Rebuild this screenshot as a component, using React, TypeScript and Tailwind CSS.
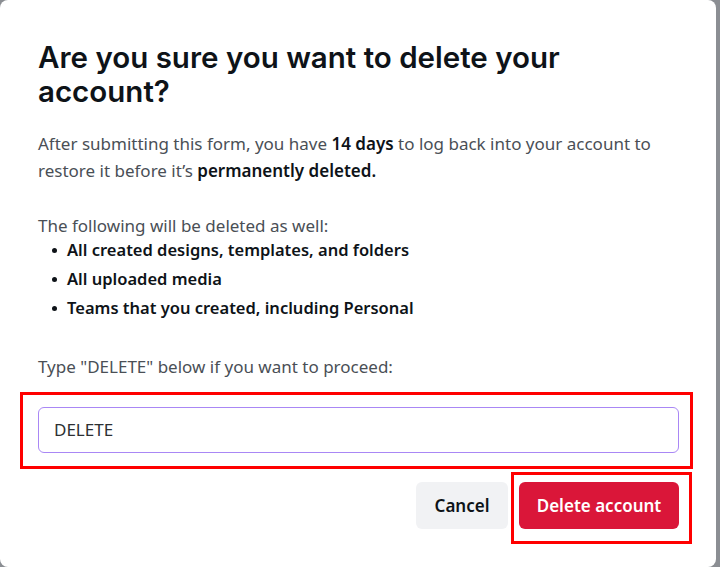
import React from "react";

export default function App() {
  return (
    <div className="w-[720px] h-[567px] bg-[#8b8e93] flex overflow-hidden">
      <div className="relative w-[716px] h-[567px] bg-white rounded-[8px] pl-[38px] pr-[37px] pt-[40px] flex flex-col [font-family:'Noto_Sans',sans-serif]">
        <h1 className="w-[560px] text-[29.5px] leading-[34px] font-semibold text-[#0e1318] tracking-[0px] [font-family:Inter,sans-serif]">
          Are you sure you want to delete your account?
        </h1>
        <p className="mt-[22px] w-[630px] text-[17px] leading-[27px] text-[#4a4f56]">
          After submitting this form, you have{" "}
          <span className="font-semibold text-[#0e1318]">14 days</span> to log back into your account to
          restore it before it’s <span className="font-semibold text-[#0e1318]">permanently deleted.</span>
        </p>
        <p className="mt-[28px] text-[17px] leading-[27px] text-[#4a4f56]">The following will be deleted as well:</p>
        <ul className="flex flex-col -mt-[3px]">
          {[
            "All created designs, templates, and folders",
            "All uploaded media",
            "Teams that you created, including Personal",
          ].map((t) => (
            <li key={t} className="flex items-center h-[29px] text-[16.5px] font-semibold text-[#0e1318]">
              <span className="w-[5px] h-[5px] rounded-full bg-[#0e1318] ml-[14px] mr-[10px]" />
              {t}
            </li>
          ))}
        </ul>
        <p className="mt-[30px] text-[17px] leading-[27px] text-[#4a4f56]">Type "DELETE" below if you want to proceed:</p>
        <div className="mt-[27px] h-[46px] w-[641px] rounded-[6px] border border-[#a987f5] flex items-center px-[15px] text-[17px] text-[#2c2f33]">
          DELETE
        </div>
        <div className="mt-[29px] flex justify-end gap-[11px] w-[641px]">
          <button className="h-[47px] w-[92px] rounded-[6px] bg-[#f1f2f4] text-[17px] font-semibold text-[#0e1318]">
            Cancel
          </button>
          <button className="h-[47px] w-[160px] rounded-[6px] bg-[#da1639] text-[17px] font-semibold text-white">
            Delete account
          </button>
        </div>
        <div className="absolute left-[20px] top-[392px] w-[673px] h-[77px] border-[3px] border-[#ff0000] pointer-events-none" />
        <div className="absolute left-[511px] top-[472px] w-[181px] h-[72px] border-[3px] border-[#ff0000] pointer-events-none" />
      </div>
    </div>
  );
}
